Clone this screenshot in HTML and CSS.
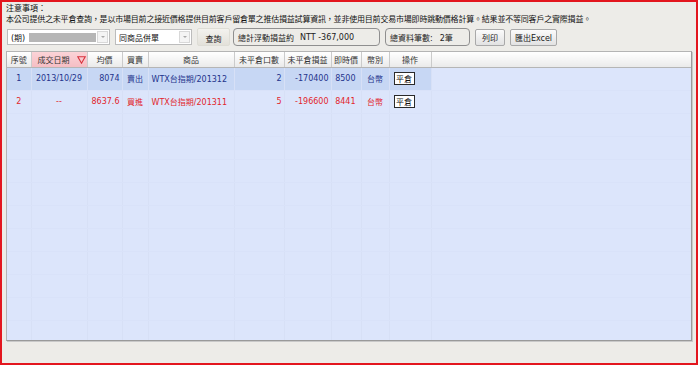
FILE: index.html
```html
<!DOCTYPE html>
<html lang="zh-Hant">
<head>
    <meta charset="UTF-8">
    <title>未平倉查詢</title>
    <link rel="stylesheet" href="styles.css">
</head>
<body>
    <div class="window">
        <div class="notice">
            <div>注意事項：</div>
            <div class="notice-text">本公司提供之未平倉查詢，是以市場目前之接近價格提供目前客戶留倉單之推估損益試算資訊，並非使用目前交易市場即時跳動價格計算。結果並不等同客戶之實際損益。</div>
        </div>

        <div class="toolbar">
            <div class="select select-account">
                <span>(期)</span>
                <span class="masked"></span>
                <span class="drop"></span>
            </div>
            <div class="select select-mode">
                <span>同商品併單</span>
                <span class="drop"></span>
            </div>
            <button class="btn-flat">查詢</button>
            <div class="group-box box-total">
                <span>總計浮動損益約</span>
                <span>NTT -367,000</span>
            </div>
            <div class="group-box box-count">
                <span>總資料筆數:</span>
                <span>2筆</span>
            </div>
            <button class="btn btn-print">列印</button>
            <button class="btn btn-excel">匯出Excel</button>
        </div>

        <div class="grid-wrap">
            <table class="grid">
                <colgroup>
                    <col style="width: 24px">
                    <col style="width: 56px">
                    <col style="width: 35px">
                    <col style="width: 26px">
                    <col style="width: 86px">
                    <col style="width: 50px">
                    <col style="width: 47px">
                    <col style="width: 30px">
                    <col style="width: 28px">
                    <col style="width: 42px">
                    <col>
                </colgroup>
                <thead>
                    <tr>
                        <th>序號</th>
                        <th class="sorted">成交日期
                            <svg class="sort-icon" width="9" height="8" viewBox="0 0 9 8"><path d="M0.8 0.8 H8.2 L4.5 7.2 Z" fill="none" stroke="#d8323c" stroke-width="1.1"/></svg>
                        </th>
                        <th>均價</th>
                        <th>買賣</th>
                        <th>商品</th>
                        <th>未平倉口數</th>
                        <th>未平倉損益</th>
                        <th>即時價</th>
                        <th>幣別</th>
                        <th>操作</th>
                        <th class="filler"></th>
                    </tr>
                </thead>
                <tbody>
                    <tr class="row-sell selected">
                        <td class="c">1</td>
                        <td class="c">2013/10/29</td>
                        <td class="r">8074</td>
                        <td class="c">賣出</td>
                        <td class="l">WTX台指期/201312</td>
                        <td class="r">2</td>
                        <td class="r">-170400</td>
                        <td class="r price">8500</td>
                        <td class="c">台幣</td>
                        <td class="op"><button class="btn-close">平倉</button></td>
                        <td class="filler"></td>
                    </tr>
                    <tr class="row-buy">
                        <td class="c">2</td>
                        <td class="c">--</td>
                        <td class="r">8637.6</td>
                        <td class="c">買進</td>
                        <td class="l">WTX台指期/201311</td>
                        <td class="r">5</td>
                        <td class="r">-196600</td>
                        <td class="r price">8441</td>
                        <td class="c">台幣</td>
                        <td class="op"><button class="btn-close">平倉</button></td>
                        <td class="filler"></td>
                    </tr>
                    <tr class="empty"><td></td><td></td><td></td><td></td><td></td><td></td><td></td><td></td><td></td><td></td><td class="filler"></td></tr>
                    <tr class="empty"><td></td><td></td><td></td><td></td><td></td><td></td><td></td><td></td><td></td><td></td><td class="filler"></td></tr>
                    <tr class="empty"><td></td><td></td><td></td><td></td><td></td><td></td><td></td><td></td><td></td><td></td><td class="filler"></td></tr>
                    <tr class="empty"><td></td><td></td><td></td><td></td><td></td><td></td><td></td><td></td><td></td><td></td><td class="filler"></td></tr>
                    <tr class="empty"><td></td><td></td><td></td><td></td><td></td><td></td><td></td><td></td><td></td><td></td><td class="filler"></td></tr>
                    <tr class="empty"><td></td><td></td><td></td><td></td><td></td><td></td><td></td><td></td><td></td><td></td><td class="filler"></td></tr>
                    <tr class="empty"><td></td><td></td><td></td><td></td><td></td><td></td><td></td><td></td><td></td><td></td><td class="filler"></td></tr>
                    <tr class="empty"><td></td><td></td><td></td><td></td><td></td><td></td><td></td><td></td><td></td><td></td><td class="filler"></td></tr>
                    <tr class="empty"><td></td><td></td><td></td><td></td><td></td><td></td><td></td><td></td><td></td><td></td><td class="filler"></td></tr>
                    <tr class="empty"><td></td><td></td><td></td><td></td><td></td><td></td><td></td><td></td><td></td><td></td><td class="filler"></td></tr>
                </tbody>
            </table>
        </div>
    </div>
</body>
</html>
```

FILE: styles.css
```css
* {
    margin: 0;
    padding: 0;
    box-sizing: border-box;
}

body {
    background: #edece8;
    font-family: "DejaVu Sans", "Noto Sans CJK TC", sans-serif;
    font-size: 8px;
    color: #111;
}

.window {
    width: 698px;
    height: 365px;
    border: 2px solid #e3161e;
    padding: 1px 4px 0;
    overflow: hidden;
}

/* notice lines */
.notice {
    line-height: 11px;
}

.notice-text {
    letter-spacing: -0.2px;
    white-space: nowrap;
}

/* toolbar */
.toolbar {
    display: flex;
    align-items: center;
    height: 18px;
    margin-top: 3px;
    margin-left: 1px;
}

.select {
    display: flex;
    align-items: center;
    height: 16px;
    padding-left: 3px;
    background: #fff;
    border: 1px solid #bcbcbc;
    margin-right: 5px;
}

.select-account {
    width: 103px;
}

.select-mode {
    width: 77px;
}

.masked {
    width: 67px;
    height: 9px;
    margin-left: 4px;
    background: #b6b6b6;
}

.drop {
    position: relative;
    width: 11px;
    height: 12px;
    margin-left: auto;
    margin-right: 1px;
    background: #f4f4f4;
    border: 1px solid #d8d8d8;
}

.drop::after {
    content: "";
    position: absolute;
    left: 3px;
    top: 4px;
    border-left: 2px solid transparent;
    border-right: 2px solid transparent;
    border-top: 2px solid #a8a8a8;
}

.btn-flat {
    width: 33px;
    height: 18px;
    margin-right: 3px;
    padding-top: 2px;
    font: inherit;
    color: #222;
    background: linear-gradient(#f3f2ee, #e3e1da);
    border: 1px solid #deddd6;
    border-radius: 2px;
}

.group-box {
    display: flex;
    align-items: center;
    height: 18px;
    padding-left: 4px;
    margin-right: 5px;
    border: 1px solid #8f8f8f;
    border-radius: 4px;
    color: #222;
}

.box-total {
    width: 147px;
    gap: 6px;
}

.box-count {
    width: 85px;
    gap: 7px;
}

.btn {
    height: 17px;
    margin-right: 5px;
    font: inherit;
    color: #222;
    background: linear-gradient(#fbfbfb, #e2e2e2);
    border: 1px solid #a9a9a9;
    border-radius: 2px;
}

.btn-print {
    width: 30px;
}

.btn-excel {
    width: 47px;
}

/* grid */
.grid-wrap {
    height: 290px;
    margin-top: 5px;
    background: #dce5fb;
    border: 1px solid #b4b4b4;
    border-right-color: #9a9a9a;
    border-bottom-color: #9a9a9a;
    box-shadow: 1px 1px 0 #c9c9c9;
    overflow: hidden;
}

.grid {
    width: 100%;
    table-layout: fixed;
    border-collapse: collapse;
}

.grid th {
    height: 15px;
    font-weight: normal;
    color: #333;
    background: linear-gradient(#ffffff, #eaeaea);
    border-bottom: 1px solid #b5b5b5;
    border-right: 1px solid #cbcbcb;
    white-space: nowrap;
    overflow: hidden;
}

.grid th.sorted {
    background: linear-gradient(#fbd3d7, #f5bec4);
    text-align: left;
    padding-left: 6px;
}

.sort-icon {
    margin-left: 5px;
    vertical-align: -1px;
}

.grid th.filler {
    border-right: none;
}

.grid td {
    height: 23px;
    padding: 0 2px;
    border-right: 1px solid #d7e0f6;
    border-bottom: 1px solid #d9e2f9;
    white-space: nowrap;
    overflow: hidden;
}

.grid td.filler {
    border-right: none;
}

.grid td.c {
    text-align: center;
}

.grid td.r {
    text-align: right;
}

.grid td.l {
    padding-left: 3px;
}

.grid td.price {
    padding-right: 5px;
}

.grid td.op {
    padding-left: 4px;
}

.row-sell td {
    color: #24348c;
}

.row-sell.selected td:not(.filler) {
    background: #c7d7f4;
}

.row-buy td {
    color: #e2252b;
}

.btn-close {
    width: 21px;
    height: 13px;
    font: inherit;
    color: #111;
    background: #fff;
    border: 1px solid #2a2a2a;
}
```
